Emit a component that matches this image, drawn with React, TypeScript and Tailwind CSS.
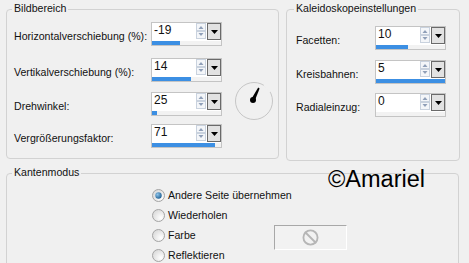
import { Ban } from 'lucide-react';
import type { ReactNode } from 'react';

interface SpinRow {
  label: string;
  value: string;
  pct: number;
  mt: string;
}

const leftRows: SpinRow[] = [
  { label: 'Horizontalverschiebung (%):', value: '-19', pct: 41, mt: 'mt-0' },
  { label: 'Vertikalverschiebung (%):', value: '14', pct: 57, mt: 'mt-[12px]' },
  { label: 'Drehwinkel:', value: '25', pct: 7, mt: 'mt-[10px]' },
  { label: 'Vergrößerungsfaktor:', value: '71', pct: 91, mt: 'mt-[8px]' },
];

const rightRows: SpinRow[] = [
  { label: 'Facetten:', value: '10', pct: 47, mt: 'mt-0' },
  { label: 'Kreisbahnen:', value: '5', pct: 100, mt: 'mt-[10px]' },
  { label: 'Radialeinzug:', value: '0', pct: 0, mt: 'mt-[9px]' },
];

const radios = ['Andere Seite übernehmen', 'Wiederholen', 'Farbe', 'Reflektieren'];

const Group = ({ title, className, titleLeft, children }: { title: string; className: string; titleLeft: string; children: ReactNode }) => (
  <div className={`relative border border-[#d2d2d2] rounded-[4px] shrink-0 ${className}`}>
    <span className={`absolute -top-[8px] ${titleLeft} px-[2px] leading-[13px] bg-[#f0f0f0]`}>{title}</span>
    {children}
  </div>
);

const Spin = ({ value, pct }: { value: string; pct: number }) => (
  <div className="w-[71px] h-[24px] border border-[#c4c4c4] bg-white flex flex-col shrink-0">
    <div className="flex h-[17px]">
      <span className="flex-1 pl-[2px] text-[12px] leading-[14px]">{value}</span>
      <svg width="10" height="16" viewBox="0 0 10 16" className="mr-[1px]">
        <rect x="0.5" y="0.5" width="9" height="7" fill="#f4f6f9" stroke="#c9d2de" />
        <rect x="0.5" y="8.5" width="9" height="7" fill="#f4f6f9" stroke="#c9d2de" />
        <path d="M2.5 6 L5 3 L7.5 6 Z" fill="#8f9fb8" />
        <path d="M2.5 10 L5 13 L7.5 10 Z" fill="#8f9fb8" />
      </svg>
      <div className="w-[14px] h-[17px] border border-[#6a6a6a] bg-[#e2e2e2] flex items-center justify-center">
        <svg width="7" height="4" viewBox="0 0 7 4">
          <path d="M0 0 L7 0 L3.5 4 Z" fill="#000" />
        </svg>
      </div>
    </div>
    <div className="h-[4px] mt-[1px] bg-[#f2f2f2]">
      <div className="h-full bg-[#3c8fe3]" style={{ width: `${pct}%` }} />
    </div>
  </div>
);

const Dial = () => (
  <svg width="40" height="40" viewBox="0 0 40 40">
    <circle cx="20" cy="20" r="18.5" fill="none" stroke="#c6c6c6" strokeWidth="1" />
    <path d="M30 4 A18.5 18.5 0 0 1 36 11" stroke="#f0f0f0" strokeWidth="2" fill="none" />
    <path d="M17.2 18.2 L24.2 6.6 L25.6 7.4 L20.8 19.8 Z" fill="#000" />
    <circle cx="19" cy="19" r="3" fill="#000" />
  </svg>
);

const Radio = ({ checked }: { checked: boolean }) => (
  <svg width="13" height="13" viewBox="0 0 13 13" className="shrink-0">
    <defs>
      <radialGradient id="rg" cx="0.7" cy="0.7" r="0.8">
        <stop offset="0" stopColor="#ffffff" />
        <stop offset="1" stopColor="#d8d8d8" />
      </radialGradient>
      <radialGradient id="dot" cx="0.35" cy="0.35" r="0.7">
        <stop offset="0" stopColor="#8ec4ea" />
        <stop offset="1" stopColor="#1e5f93" />
      </radialGradient>
    </defs>
    <circle cx="6.5" cy="6.5" r="6" fill="url(#rg)" stroke="#a4a4a4" />
    {checked && <circle cx="6.5" cy="6.5" r="3.2" fill="url(#dot)" />}
  </svg>
);

export default function App() {
  return (
    <div className="w-[469px] h-[263px] bg-[#f0f0f0] overflow-hidden relative text-[10.6px] text-[#111] font-['Liberation_Sans',Arial,sans-serif]">
      <div className="flex pt-[9px] pl-[6px] gap-[7px]">
        <Group title="Bildbereich" titleLeft="left-[5px]" className="w-[273px] h-[150px]">
          <div className="flex">
            <div className="flex flex-col pl-[7px] pt-[12px]">
              {leftRows.map((r) => (
                <div key={r.label} className={`flex items-start ${r.mt}`}>
                  <span className="w-[137px] pt-[8px] leading-[13px] whitespace-nowrap">{r.label}</span>
                  <Spin value={r.value} pct={r.pct} />
                </div>
              ))}
            </div>
            <div className="ml-[12px] mt-[71px]">
              <Dial />
            </div>
          </div>
        </Group>

        <Group title="Kaleidoskopeinstellungen" titleLeft="left-[7px]" className="w-[174px] h-[152px]">
          <div className="flex flex-col pl-[9px] pt-[16px]">
            {rightRows.map((r) => (
              <div key={r.label} className={`flex items-start ${r.mt}`}>
                <span className="w-[79px] pt-[8px] leading-[13px] whitespace-nowrap">{r.label}</span>
                <Spin value={r.value} pct={r.pct} />
              </div>
            ))}
          </div>
        </Group>
      </div>

      <Group title="Kantenmodus" titleLeft="left-[5px]" className="ml-[6px] mt-[12px] w-[453px] h-[110px]">
        <div className="flex items-start pl-[145px]">
          <div className="w-[122px] pt-[11px] flex flex-col">
            {radios.map((label, i) => (
              <div key={label} className="h-[20px] flex items-center gap-[3px] whitespace-nowrap">
                <Radio checked={i === 0} />
                <span className="leading-[13px]">{label}</span>
              </div>
            ))}
          </div>
          <div className="mt-[51px] w-[73px] h-[25px] border border-t-[#a8a8a8] border-l-[#a8a8a8] border-r-[#ffffff] border-b-[#ffffff] bg-[#f2f2f2] flex items-center justify-center">
            <Ban size={17} strokeWidth={2.6} color="#b6b6b6" />
          </div>
        </div>
      </Group>

      <span className="absolute left-[328px] top-[168px] text-[23.5px] leading-none text-black font-['Liberation_Sans',Arial,sans-serif]">©Amariel</span>
    </div>
  );
}
